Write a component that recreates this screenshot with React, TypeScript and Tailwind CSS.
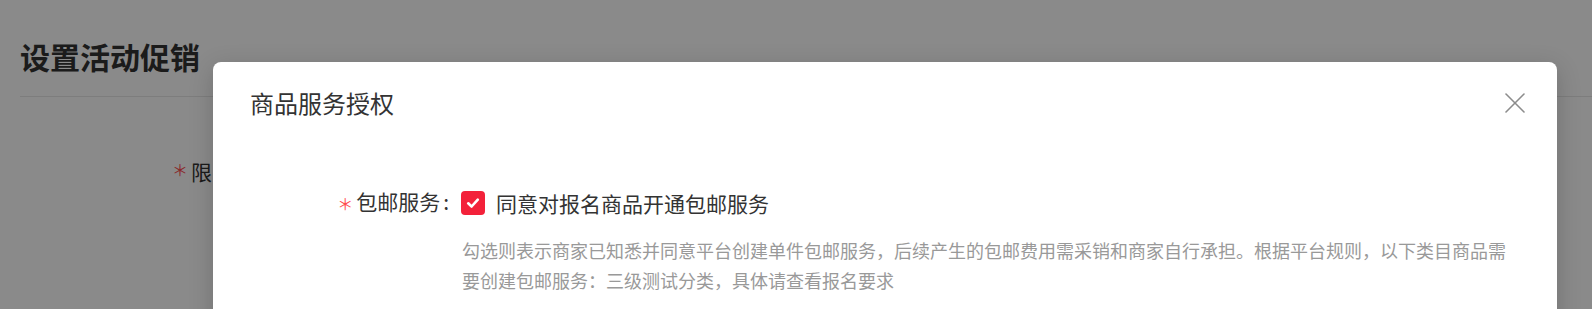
import { useState } from "react";

const cjk = "font-['Noto_Sans_CJK_SC','Noto_Sans',sans-serif]";

function CloseIcon() {
  return (
    <svg width="20" height="20" viewBox="0 0 20 20" fill="none" stroke="#8c8c8c" strokeWidth="1.6" strokeLinecap="round">
      <path d="M1 1L19 19" />
      <path d="M19 1L1 19" />
    </svg>
  );
}

function Required() {
  return (
    <span className="mr-[3px] inline-block -translate-y-[2px] align-middle text-[16px] leading-[36px] text-[#ff4d4f]">
      ＊
    </span>
  );
}

function CheckBox({ checked, onChange }: { checked: boolean; onChange: () => void }) {
  return (
    <button
      type="button"
      onClick={onChange}
      className={`flex h-[24px] w-[24px] items-center justify-center rounded-[4px] ${
        checked ? "bg-[#f3213a]" : "border border-[#d9d9d9] bg-white"
      }`}
    >
      {checked && (
        <svg width="16" height="16" viewBox="0 0 16 16" fill="none" stroke="white" strokeWidth="2.6" strokeLinecap="round" strokeLinejoin="round">
          <path d="M3.2 8.3L6.6 11.5L12.8 4.6" />
        </svg>
      )}
    </button>
  );
}

export default function App() {
  const [agreed, setAgreed] = useState(true);

  return (
    <div className={`relative h-[309px] w-full overflow-hidden bg-white ${cjk}`}>
      {/* page behind the dialog */}
      <div className="pt-[34px]">
        <h1 className="pl-[20px] text-[30px] font-bold leading-[45px] text-[#333]">设置活动促销</h1>
        <div className="ml-[20px] mt-[17px] h-px bg-[#e8e8e8]" />
        <div className="mt-[56px] flex items-center pl-[172px] text-[21px] leading-[36px] text-[#333]">
          <Required />
          <span>限时活动</span>
        </div>
      </div>

      <div className="absolute inset-0 bg-black/[0.46]" />

      {/* dialog */}
      <div className="absolute left-[213px] top-[62px] h-[300px] w-[1344px] rounded-[8px] bg-white shadow-[0_6px_24px_rgba(0,0,0,0.18)]">
        <div className="flex items-center justify-between pl-[37px] pr-[32px] pt-[23px]">
          <div className="text-[24px] leading-[36px] text-[#333]">商品服务授权</div>
          <button type="button" className="flex h-[36px] items-center">
            <CloseIcon />
          </button>
        </div>

        <div className="mt-[64px] flex h-[36px] items-center">
          <div className="w-[248px] text-right text-[21px] leading-[36px] text-[#333]">
            <Required />
            <span>包邮服务</span>
            <span className="ml-[3px] mr-[12px]">:</span>
          </div>
          <CheckBox checked={agreed} onChange={() => setAgreed(!agreed)} />
          <span className="ml-[11px] text-[21px] leading-[36px] text-[#333]">同意对报名商品开通包邮服务</span>
        </div>

        <p className="ml-[249px] mt-[14px] w-[1050px] text-[18px] leading-[30px] text-[#999]">
          勾选则表示商家已知悉并同意平台创建单件包邮服务，后续产生的包邮费用需采销和商家自行承担。根据平台规则，以下类目商品需要创建包邮服务：三级测试分类，具体请查看报名要求
        </p>
      </div>
    </div>
  );
}
